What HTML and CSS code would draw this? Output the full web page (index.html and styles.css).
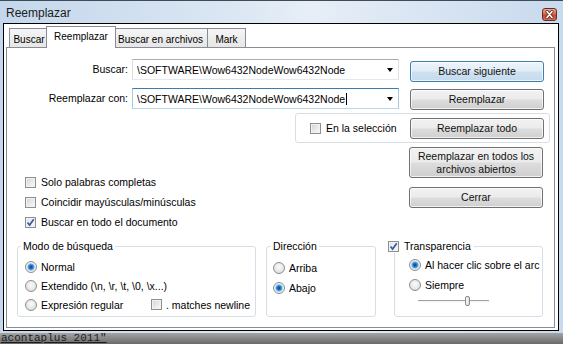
FILE: index.html
```html
<!DOCTYPE html>
<html lang="es">
<head>
    <meta charset="UTF-8">
    <meta name="viewport" content="width=device-width, initial-scale=1.0">
    <title>Reemplazar</title>
    <link rel="stylesheet" href="styles.css">
</head>
<body>
    <div class="window">
        <div class="titlebar">
            <span class="title">Reemplazar</span>
            <span class="close-btn">
                <svg width="13" height="11" viewBox="0 0 13 11">
                    <path d="M4 2.5 L9 8.5 M9 2.5 L4 8.5" stroke="#5a1e14" stroke-width="3.2" stroke-linecap="round"/>
                    <path d="M4 2.5 L9 8.5 M9 2.5 L4 8.5" stroke="#fff" stroke-width="1.7" stroke-linecap="round"/>
                </svg>
            </span>
        </div>
        <div class="client">
            <div class="tabs">
                <div class="tab tab-buscar">Buscar</div>
                <div class="tab active">Reemplazar</div>
                <div class="tab tab-files">Buscar en archivos</div>
                <div class="tab tab-mark">Mark</div>
            </div>
            <div class="panel">
                <div class="row row1">
                    <label class="field-label">Buscar:</label>
                    <div class="combo">
                        <span class="combo-text">\SOFTWARE\Wow6432NodeWow6432Node</span>
                        <span class="arrow"></span>
                    </div>
                    <button class="btn default">Buscar siguiente</button>
                </div>
                <div class="row row2">
                    <label class="field-label">Reemplazar con:</label>
                    <div class="combo focus">
                        <span class="combo-text">\SOFTWARE\Wow6432NodeWow6432Node<span class="caret"></span></span>
                        <span class="arrow"></span>
                    </div>
                    <button class="btn">Reemplazar</button>
                </div>
                <div class="selection">
                    <span class="opt"><span class="cb"></span>En la selección</span>
                    <button class="btn">Reemplazar todo</button>
                </div>
                <div class="middle">
                    <div class="options">
                        <div class="opt"><span class="cb"></span>Solo palabras completas</div>
                        <div class="opt"><span class="cb"></span>Coincidir mayúsculas/minúsculas</div>
                        <div class="opt"><span class="cb on"><svg width="9" height="9" viewBox="0 0 9 9"><path d="M1.5 4.5 L3.6 7 L7.8 1.2" fill="none" stroke="#3a5aa8" stroke-width="1.7"/></svg></span>Buscar en todo el documento</div>
                    </div>
                    <div class="side">
                        <button class="btn tall">Reemplazar en todos los<br>archivos abiertos</button>
                        <button class="btn close">Cerrar</button>
                    </div>
                </div>
                <div class="groups">
                    <fieldset class="group mode">
                        <legend>Modo de búsqueda</legend>
                        <div class="radio-row"><span class="rb on"></span>Normal</div>
                        <div class="radio-row"><span class="rb"></span>Extendido (\n, \r, \t, \0, \x...)</div>
                        <div class="radio-row">
                            <span class="item wide"><span class="rb"></span>Expresión regular</span>
                            <span class="item"><span class="cb"></span>. matches newline</span>
                        </div>
                    </fieldset>
                    <fieldset class="group dir">
                        <legend>Dirección</legend>
                        <div class="radio-row"><span class="rb"></span>Arriba</div>
                        <div class="radio-row"><span class="rb on"></span>Abajo</div>
                    </fieldset>
                    <fieldset class="group trans">
                        <legend><span class="cb on"><svg width="9" height="9" viewBox="0 0 9 9"><path d="M1.5 4.5 L3.6 7 L7.8 1.2" fill="none" stroke="#3a5aa8" stroke-width="1.7"/></svg></span>Transparencia</legend>
                        <div class="radio-row"><span class="rb on"></span>Al hacer clic sobre el arc</div>
                        <div class="radio-row"><span class="rb"></span>Siempre</div>
                        <div class="slider">
                            <span class="track left"></span>
                            <span class="thumb"></span>
                            <span class="track right"></span>
                        </div>
                    </fieldset>
                </div>
            </div>
        </div>
    </div>
    <div class="backdrop">acontaplus 2011"</div>
</body>
</html>
```

FILE: styles.css
```css
* {
    box-sizing: border-box;
}
body {
    margin: 0;
    width: 563px;
    height: 344px;
    overflow: hidden;
    background: #6f6f6f;
    font-family: "Liberation Sans", Arial, sans-serif;
    font-size: 10.5px;
    color: #000;
}
.window {
    width: 563px;
    height: 333px;
    padding: 0 4px 2px 3px;
    border-top: 1px solid #3f4b58;
    background: linear-gradient(to right, #c4d7ec, #dae6f3 40%, #e7eef7 55%, #c8daee 100%);
    display: flex;
    flex-direction: column;
}
.titlebar {
    height: 22px;
    display: flex;
    justify-content: space-between;
    align-items: center;
    padding: 0 2px 0 3px;
}
.title {
    font-size: 12px;
    color: #1c1c1c;
    margin-top: 2px;
}
.close-btn {
    align-self: flex-start;
    margin-top: 7px;
    width: 15px;
    height: 13px;
    border: 1px solid #6a2a1e;
    border-radius: 3px;
    background: linear-gradient(#eab0a0, #d9664e 48%, #c8432c 52%, #da7258);
    display: flex;
    align-items: center;
    justify-content: center;
}
.client {
    height: 308px;
    border: 1px solid #000;
    background: #fff;
    padding: 0 3px 0 2px;
}
.tabs {
    height: 23px;
    display: flex;
    align-items: flex-end;
    padding-left: 3px;
    font-size: 10px;
}
.tab {
    height: 19px;
    border: 1px solid #898c95;
    border-bottom: none;
    background: linear-gradient(#f5f5f5, #e6e6e6);
    padding-top: 4px;
    line-height: 13px;
    text-align: center;
    white-space: nowrap;
}
.tab + .tab {
    margin-left: -1px;
}
.tab-buscar {
    width: 40px;
}
.tab.active {
    width: 70px;
    height: 22px;
    margin: 0 -2px -1px -3px;
    padding-top: 3px;
    background: #fff;
    position: relative;
    z-index: 1;
}
.tab-files {
    width: 95px;
}
.tab-mark {
    width: 39px;
}
.panel {
    height: 281px;
    border: 1px solid #898c95;
    padding-top: 11px;
    background: #fff;
}
.row {
    display: flex;
    align-items: flex-start;
}
.row1 {
    height: 23px;
}
.row1 .btn {
    margin-top: 2px;
}
.row2 {
    height: 22px;
    margin-top: 6px;
}
.row2 .btn {
    margin-top: 1px;
}
.field-label {
    width: 121px;
    margin-right: 4px;
    text-align: right;
    line-height: 21px;
}
.combo {
    width: 267px;
    height: 21px;
    display: flex;
    align-items: center;
    padding-left: 4px;
    border: 1px solid;
    border-color: #abadb3 #dbdee3 #e3e9ef #dbdee3;
    background: #fff;
}
.combo.focus {
    border-color: #3d7bad #a4c9e3 #b7d9ed #a4c9e3;
}
.combo-text {
    flex: 1;
    white-space: nowrap;
    overflow: hidden;
    display: flex;
    align-items: center;
}
.caret {
    display: inline-block;
    width: 1px;
    height: 12px;
    margin-left: 1px;
    background: #000;
}
.arrow {
    width: 0;
    height: 0;
    border-left: 3px solid transparent;
    border-right: 3px solid transparent;
    border-top: 4px solid #000;
    margin-right: 5px;
}
.btn {
    width: 134px;
    height: 21px;
    margin-left: 11px;
    padding: 0;
    border: 1px solid #707070;
    border-radius: 3px;
    background: linear-gradient(#f2f2f2, #ebebeb 48%, #dddddd 52%, #cfcfcf);
    box-shadow: inset 0 0 0 1px rgba(255, 255, 255, 0.7);
    font-family: inherit;
    font-size: inherit;
    font-weight: normal;
    line-height: 13px;
    color: #111;
}
.btn.default {
    border-color: #3c7fb1;
    background: linear-gradient(#eef5fb, #e0ecf6 48%, #cfe1f0 52%, #c4dbee);
}
.selection {
    margin: 3px 0 0 288px;
    width: 255px;
    height: 30px;
    border: 1px solid #d5dfe5;
    border-radius: 3px;
    display: flex;
    align-items: center;
    padding: 0 5px 0 14px;
}
.selection .btn {
    margin-left: auto;
}
.opt {
    display: flex;
    align-items: center;
    gap: 5px;
    white-space: nowrap;
}
.cb {
    flex: none;
    width: 11px;
    height: 11px;
    border: 1px solid #8e8f8f;
    background: linear-gradient(135deg, #d2d2d2, #eeeeee 65%, #fafafa);
    box-shadow: inset 0 0 0 1px #f2f2f2;
    display: inline-flex;
    align-items: center;
    justify-content: center;
}
.cb.on {
    background: linear-gradient(135deg, #e6e6e6, #f8f8f8);
}
.middle {
    height: 97px;
    display: flex;
}
.options {
    padding: 29px 0 0 18px;
}
.options .opt {
    height: 20px;
}
.side {
    margin: 0 11px 0 auto;
    padding-top: 4px;
    display: flex;
    flex-direction: column;
}
.side .btn {
    margin-left: 0;
}
.btn.tall {
    height: 31px;
}
.btn.close {
    margin-top: 9px;
}
.groups {
    display: flex;
    padding-left: 10px;
}
.group {
    margin: 0;
    min-width: 0;
    height: 77px;
    border: 1px solid #d5dfe5;
    border-radius: 3px;
}
.group legend {
    padding: 0 2px;
    line-height: 13px;
    white-space: nowrap;
}
.mode {
    width: 239px;
    padding: 4px 0 0 7px;
}
.mode legend {
    margin-left: -4px;
}
.mode .radio-row {
    height: 19px;
}
.dir {
    width: 110px;
    margin-left: 10px;
    padding: 5px 0 0 6px;
}
.dir legend {
    margin-left: -2px;
}
.trans {
    width: 149px;
    margin-left: 18px;
    padding: 2px 0 0 14px;
}
.trans legend {
    margin-left: -21px;
    padding: 0 3px 0 0;
    display: flex;
    align-items: center;
    gap: 5px;
}
.radio-row {
    height: 20px;
    display: flex;
    align-items: center;
    gap: 4px;
    white-space: nowrap;
}
.item {
    display: flex;
    align-items: center;
    gap: 4px;
}
.item.wide {
    width: 122px;
}
.rb {
    flex: none;
    width: 12px;
    height: 12px;
    border-radius: 50%;
    border: 1px solid #8d8e8f;
    background: radial-gradient(circle at 50% 40%, #fbfbfb, #e6e6e6 60%, #cfcfcf);
}
.rb.on {
    background: radial-gradient(circle at 50% 50%, #0d3f7c 0, #2272c8 1.8px, #63aeea 3px, #c9def0 3.8px, #f2f2f2 4.5px, #dcdcdc 100%);
}
.slider {
    height: 12px;
    margin-left: 9px;
    display: flex;
    align-items: center;
}
.track {
    height: 2px;
    border-top: 1px solid #a2a2a2;
    border-bottom: 1px solid #f4f4f4;
}
.track.left {
    width: 47px;
}
.track.right {
    width: 19px;
}
.thumb {
    width: 5px;
    height: 10px;
    border: 1px solid #8a8a8a;
    border-radius: 2px;
    background: linear-gradient(to right, #fafafa, #dcdcdc);
}
.backdrop {
    height: 11px;
    overflow: hidden;
    font-family: "Liberation Mono", monospace;
    font-size: 11px;
    line-height: 10px;
    padding-left: 1px;
    text-decoration: underline;
    white-space: pre;
    color: #1c1c1c;
    background: linear-gradient(#a4a4a4, #6a6a6a);
}
```
